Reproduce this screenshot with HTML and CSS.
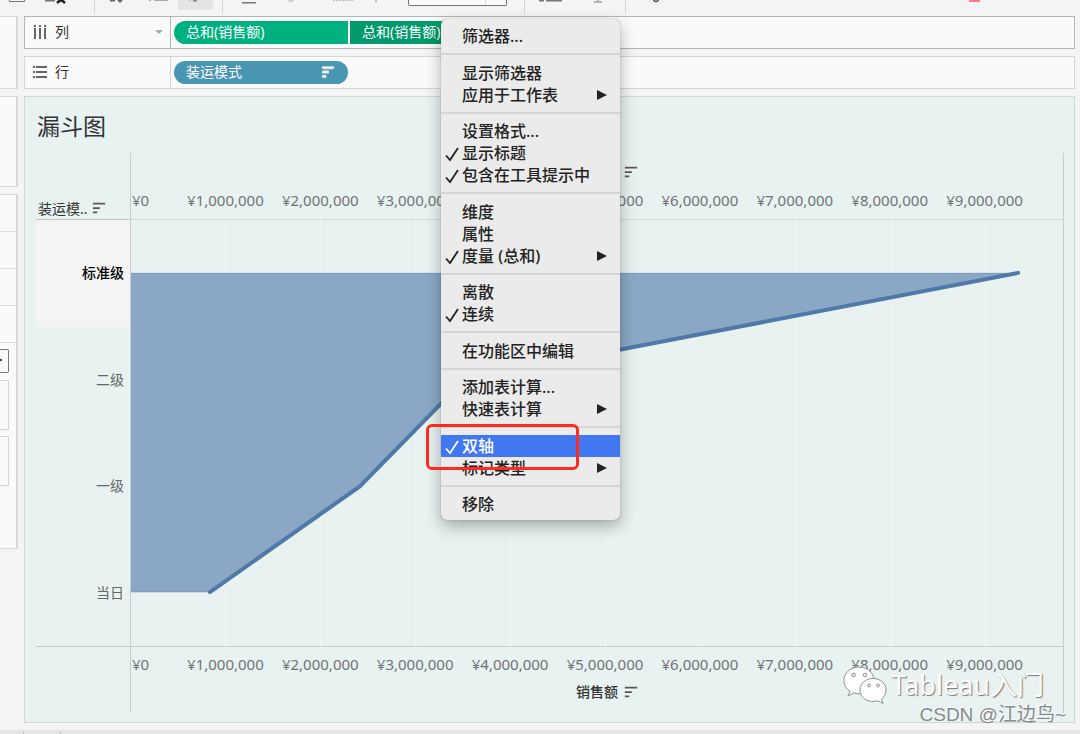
FILE: index.html
```html
<!DOCTYPE html>
<html lang="zh-CN">
<head>
<meta charset="utf-8">
<title>漏斗图</title>
<link rel="stylesheet" href="styles.css">
</head>
<body>
<svg class="defs" aria-hidden="true">
  <symbol id="sort" viewBox="0 0 16 16">
    <path class="halo" d="M2 3h12M2 8h7M2 13h4"/>
    <path class="bars" d="M1 3h14M1 8h8M1 13h5"/>
  </symbol>
  <symbol id="check" viewBox="0 0 16 16"><path d="M2 9.500l4 4.500L14 2" fill="none" stroke="currentColor" stroke-width="1.800"/></symbol>
</svg>
<header class="toolbar">
  <button aria-label="保存"><svg width="35" height="14" viewBox="0 0 35 14"><path d="M9.500-4v5.500h15V-4" fill="none" stroke="#777"/></svg></button>
  <button aria-label="清除"><svg width="59" height="14" viewBox="35 0 59 14"><path d="M45 0h10v1.500H45z" fill="#777"/><path d="M57-4l8 7M65-4l-8 7" stroke="#222" stroke-width="2.500"/></svg></button>
  <span class="rule"></span>
  <button aria-label="交换"><svg width="38" height="14" viewBox="95 0 38 14"><path d="M110 0h5v1.500h-5zM115-2h10l-5 5z" fill="#666"/></svg></button>
  <button aria-label="排序"><svg width="45" height="14" viewBox="133 0 45 14"><path d="M149 0h2v1h-2zM154 0h14v1h-14z" fill="#aaa"/></svg></button>
  <button aria-label="降序" class="on"><svg width="35" height="10" viewBox="178 0 35 10"><path d="M187-2l3 3 2-3zM193 0h4v1.500h-4z" fill="#888"/></svg></button>
  <span class="rule wide"></span>
  <button aria-label="突出显示"><svg width="40" height="14" viewBox="232 0 40 14"><path d="M242 2h14v1.500h-14z" fill="#777"/></svg></button>
  <button aria-label="附件"><svg width="44" height="14" viewBox="272 0 44 14"><circle cx="291" cy="-1" r="2.500" fill="none" stroke="#aaa"/></svg></button>
  <button aria-label="标签"><svg width="48" height="14" viewBox="316 0 48 14"><path d="M333 .5h20" stroke="#bbb" stroke-dasharray="2 1"/></svg></button>
  <button aria-label="固定"><svg width="44" height="14" viewBox="364 0 44 14"><path d="M376-1v3" stroke="#888"/></svg></button>
  <select aria-label="适合"><option></option></select>
  <span class="rule fit"></span>
  <button aria-label="显示"><svg width="50" height="14" viewBox="525 0 50 14"><path d="M539 0h5v1.500h-5zM546 0h16v1.500h-16z" fill="#777"/></svg></button>
  <button aria-label="演示"><svg width="50" height="14" viewBox="575 0 50 14"><path d="M598-2v3.500M594 2h8" stroke="#777"/></svg></button>
  <span class="rule"></span>
  <button aria-label="共享"><svg width="60" height="14" viewBox="626 0 60 14"><circle cx="656" cy="-1" r="2.500" fill="none" stroke="#555" stroke-width="1.500"/></svg></button>
  <button aria-label="智能推荐" class="end"><svg width="111" height="14" viewBox="969 0 111 14"><path d="M969 0h11v2h-11z" fill="#ff7a85"/></svg></button>
</header>

<div class="workspace">
  <aside class="side">
    <section class="card pages"></section>
    <section class="card filters"></section>
    <section class="card marks">
      <div class="line"></div><div class="line"></div><div class="line"></div><div class="line"></div>
      <button class="drop" aria-label="标记类型"><svg width="6" height="6" viewBox="0 0 6 6"><path d="M0 1h2v2H0z" fill="#444"/></svg></button>
      <div class="slot"></div><div class="slot"></div>
    </section>
  </aside>

  <main class="content">
    <section class="shelf active">
      <div class="name">
        <svg width="16" height="16" viewBox="0 0 16 16"><path d="M3 1v2M8 1v2M13 1v2M3 4v11M8 4v11M13 4v11" stroke="#666" stroke-width="2"/></svg>
        <span>列</span>
        <svg class="caret" width="8" height="4" viewBox="0 0 8 4"><path d="M0 0h8L4 4z" fill="#aaa"/></svg>
      </div>
      <div class="pills"><button class="pill green first">总和(销售额)</button><button class="pill dark">总和(销售额)</button></div>
    </section>
    <section class="shelf">
      <div class="name">
        <svg width="16" height="16" viewBox="0 0 16 16"><path d="M1 3h2M1 8h2M1 13h2M4 3h11M4 8h11M4 13h11" stroke="#666" stroke-width="2"/></svg>
        <span>行</span>
      </div>
      <div class="pills"><button class="pill blue">装运模式 <svg class="sort white" width="14" height="14"><use href="#sort"/></svg></button></div>
    </section>

    <section class="sheet">
      <h1>漏斗图</h1>
      <div class="chart">
        <div class="corner"><span>装运模..</span><svg class="sort" width="14" height="14"><use href="#sort"/></svg></div>
        <div class="axis top">
          <div class="title"><span>销售额</span><svg class="sort" width="14" height="14"><use href="#sort"/></svg></div>
          <div class="ticks"><span>¥0</span><span>¥1,000,000</span><span>¥2,000,000</span><span>¥3,000,000</span><span>¥4,000,000</span><span>¥5,000,000</span><span>¥6,000,000</span><span>¥7,000,000</span><span>¥8,000,000</span><span>¥9,000,000</span></div>
        </div>
        <div class="rows"><div class="picked"><span>标准级</span></div><div>二级</div><div>一级</div><div>当日</div></div>
        <div class="plot">
          <svg viewBox="0 0 933 427" preserveAspectRatio="none">
            <path class="grid" d="M95-6v439M190-6v439M285-6v439M380-6v439M475-6v439M571-6v439M666-6v439M761-6v439M856-6v439"/>
            <path class="area" d="M0 53H888L334 160 229 267 79 373H0z"/>
            <path class="edge" d="M0 53.500H888M0 372.500H79"/>
            <path class="trend" d="M888 53L334 160 229 267 79 373"/>
          </svg>
        </div>
        <div class="foot"></div>
        <div class="axis bottom">
          <div class="ticks"><span>¥0</span><span>¥1,000,000</span><span>¥2,000,000</span><span>¥3,000,000</span><span>¥4,000,000</span><span>¥5,000,000</span><span>¥6,000,000</span><span>¥7,000,000</span><span>¥8,000,000</span><span>¥9,000,000</span></div>
          <div class="title"><span>销售额</span><svg class="sort" width="14" height="14"><use href="#sort"/></svg></div>
        </div>
      </div>
    </section>
  </main>
</div>
<footer class="status"><span></span><span></span></footer>

<div class="menu" role="menu">
  <button role="menuitem">筛选器...</button>
  <hr>
  <button role="menuitem">显示筛选器</button>
  <button role="menuitem">应用于工作表<i></i></button>
  <hr>
  <button role="menuitem">设置格式...</button>
  <button role="menuitem"><svg><use href="#check"/></svg>显示标题</button>
  <button role="menuitem"><svg><use href="#check"/></svg>包含在工具提示中</button>
  <hr>
  <button role="menuitem">维度</button>
  <button role="menuitem">属性</button>
  <button role="menuitem"><svg><use href="#check"/></svg>度量 (总和)<i></i></button>
  <hr>
  <button role="menuitem">离散</button>
  <button role="menuitem"><svg><use href="#check"/></svg>连续</button>
  <hr>
  <button role="menuitem">在功能区中编辑</button>
  <hr>
  <button role="menuitem">添加表计算...</button>
  <button role="menuitem">快速表计算<i></i></button>
  <hr>
  <button role="menuitem" class="selected"><svg><use href="#check"/></svg>双轴</button>
  <button role="menuitem">标记类型<i></i></button>
  <hr>
  <button role="menuitem">移除</button>
</div>
<div class="callout"></div>

<div class="brand">
  <svg width="44" height="40" viewBox="0 0 44 40">
    <g fill="#fff" stroke="#8d9292" stroke-width="1">
      <path d="M16 2C7.500 2 1 8 1 15.500c0 4.500 2 8 6 10.500l-2 5 6-3c2 .6 4 1 6 .8C24 28 31 23 31 15.500 31 8 24.500 2 16 2z"/>
      <path d="M30 13.500c-7.500 0-13 5-13 11.500s5.500 11.500 13 11.500c1.700 0 3.300-.3 4.800-.8l5.200 2.800-1.500-4.500c2.800-2.200 4.500-5 4.500-9 0-6.500-5.500-11.500-13-11.500z"/>
    </g>
    <g fill="#e8f2f1" stroke="#8d9292"><circle cx="10.500" cy="10" r="1.800"/><circle cx="22" cy="10" r="1.800"/><circle cx="26" cy="20.500" r="1.500"/><circle cx="35" cy="20.500" r="1.500"/></g>
  </svg>
  <span>Tableau入门</span>
</div>
<div class="credit">CSDN @江边鸟~</div>
</body>
</html>
```
FILE: styles.css
```css
* { box-sizing: border-box; }

body {
  margin: 0;
  min-height: 100vh;
  display: flex;
  flex-direction: column;
  position: relative;
  background: #f4f4f4;
  color: #333;
  font: 14px/20px "Noto Sans", "Noto Sans CJK SC", sans-serif;
  overflow: hidden;
}

button {
  border: 0;
  padding: 0;
  background: none;
  font: inherit;
  color: inherit;
}

svg { display: block; flex: none; }
.defs { position: absolute; width: 0; height: 0; }

.toolbar {
  display: flex;
  align-items: flex-start;
  height: 16px;
  overflow: hidden;
}
.toolbar button { flex: none; }
.toolbar .on { background: #e4e4e4; }
.toolbar .end { margin-left: auto; }
.rule { flex: none; width: 1px; height: 14px; background: #d4d4d4; }
.rule.wide { margin: 0 9px; }
.rule.fit { margin-left: 17px; }
.toolbar select {
  width: 99px;
  height: 6px;
  flex: none;
  appearance: none;
  border: solid #777;
  border-width: 0 1px 1px;
  border-radius: 0 0 2px 2px;
  background: linear-gradient(#ddd, #ddd) 76px 0 / 1px 6px no-repeat #fafafa;
}

.workspace { flex: 1; display: flex; gap: 6px; padding-right: 5px; }

.side { width: 18px; flex: none; display: flex; flex-direction: column; gap: 7px; }
.card { border: solid #d8d8d8; border-width: 1px 2px 1px 0; background: #fafafa; }
.pages { height: 73px; }
.filters { height: 91px; }
.marks { height: 355px; display: flex; flex-direction: column; align-items: flex-start; }
.line { height: 37px; width: 100%; border-bottom: 1px solid #dedede; }
.drop {
  width: 9px;
  height: 24px;
  margin: 6px 0 7px;
  border: 1px solid #777;
  border-left: 0;
  border-radius: 0 2px 2px 0;
}
.slot {
  width: 9px;
  height: 50px;
  margin-bottom: 6px;
  border: 1px solid #d4d4d4;
  border-left: 0;
}

.content { flex: 1; min-width: 0; display: flex; flex-direction: column; gap: 7px; }

.shelf { display: flex; height: 33px; border: 1px solid #d4d4d4; background: #fafafa; }
.shelf.active { border-color: #b5b5b5; }
.name {
  width: 146px;
  flex: none;
  display: flex;
  align-items: center;
  gap: 7px;
  padding: 0 7px 2px;
  border-right: 1px solid #d4d4d4;
}
.active .name { border-color: #b5b5b5; }
.caret { margin-left: auto; }
.pills { display: flex; align-items: center; gap: 2px; padding-left: 3px; }
.pill {
  width: 174px;
  height: 23px;
  display: flex;
  align-items: center;
  justify-content: space-between;
  padding: 0 13px 2px 12px;
  color: #fff;
}
.green { background: #00b180; border-radius: 12px 0 0 12px; }
.dark { background: #00996b; }
.blue { background: #4996b2; border-radius: 12px; }

#sort .halo { fill: none; stroke: #fff; stroke-width: 4; stroke-opacity: .5; }
#sort .bars { fill: none; stroke: currentColor; stroke-width: 2; }
.sort { color: #555; }
.sort.white { color: #fff; }

.sheet {
  flex: 1;
  display: flex;
  flex-direction: column;
  padding: 12px 10px 9px 11px;
  border: 1px solid #d4d6d6;
  background: #e8f2f1;
}
h1 { margin: 0 0 10px; font-weight: 400; font-size: 23px; line-height: 34px; color: #333; padding-left: 1px; }

.chart {
  flex: 1;
  display: grid;
  grid-template-columns: 94px 1fr;
  grid-template-rows: 67px 1fr 66px;
}
.corner {
  display: flex;
  align-items: flex-end;
  gap: 4px;
  padding-left: 2px;
  border-bottom: 1px solid #c4c6c6;
}
.corner .sort { margin-bottom: 4px; }
.axis { display: flex; flex-direction: column; border: solid #c9cbcb; border-width: 0 1px; color: #707474; }
.axis.top { justify-content: flex-end; gap: 8px; padding-bottom: 9px; border-bottom: 1px solid #d2d8d8; }
.axis.bottom { gap: 8px; padding-top: 7px; }
.ticks {
  display: grid;
  grid-template-columns: 47fr repeat(9, 95fr) 31fr;
  font-size: 15px;
  white-space: nowrap;
}
.ticks span { display: flex; justify-content: center; min-width: 0; }
.ticks span:first-child { justify-content: flex-start; padding-left: 1px; }
.title { display: flex; align-items: center; justify-content: center; gap: 6px; padding-left: 20px; color: #333; font-weight: 500; }

.rows { display: grid; grid-template-rows: repeat(4, 1fr); border-bottom: 1px solid #c9cbcb; color: #666; }
.rows div { display: flex; align-items: center; justify-content: flex-end; padding-right: 6px; }
.rows .picked { background: #f4f4f4; color: #000; font-weight: 500; }
.plot { position: relative; border: solid #c9cbcb; border-width: 0 1px 1px; min-height: 0; }
.plot svg { position: absolute; inset: 0; width: 100%; height: 100%; overflow: visible; }
.plot path { fill: none; vector-effect: non-scaling-stroke; }
.plot .grid { stroke: #f1f2f3; }
.plot .area { fill: #8aa8c5; }
.plot .edge { stroke: #7b9dc1; }
.plot .trend { stroke: #4e79a8; stroke-width: 4; stroke-linecap: round; }

.status { display: flex; gap: 36px; height: 4px; margin-top: 7px; padding-left: 23px; background: #e6e6e6; }
.status span { width: 1px; margin-top: 2px; background: #bbb; }

.menu {
  position: absolute;
  left: 441px;
  top: 19px;
  width: 179px;
  height: 501px;
  display: flex;
  flex-direction: column;
  padding: 6px 0 5px;
  border-radius: 6px;
  background: #ebebeb;
  box-shadow: 0 0 1px rgba(0, 0, 0, .5), 0 6px 16px rgba(0, 0, 0, .3);
  color: #222;
  font-size: 16px;
  font-weight: 500;
}
.menu button {
  position: relative;
  height: 22px;
  flex: none;
  padding-left: 21px;
  line-height: 22px;
  text-align: left;
  white-space: nowrap;
}
.menu hr {
  flex: 1;
  width: 100%;
  margin: 0;
  border: 0;
  background: linear-gradient(#d5d5d5, #d5d5d5) 0 50% / 100% 2px no-repeat;
}
.menu svg { position: absolute; left: 3px; top: 4px; width: 16px; height: 16px; }
.menu i {
  position: absolute;
  right: 13px;
  top: 6px;
  border: 5px solid transparent;
  border-left: 10px solid #222;
  border-right: 0;
}
.menu .selected { background: #4178f2; color: #fff; }

.callout {
  position: absolute;
  left: 426px;
  top: 424px;
  width: 153px;
  height: 46px;
  border: 3px solid #fb2d20;
  border-radius: 6px;
}

.brand {
  position: absolute;
  right: 36px;
  bottom: 29px;
  display: flex;
  align-items: center;
  gap: 4px;
  color: #fff;
  font-size: 27px;
  line-height: 40px;
  text-shadow: 1px 1px 1px #777;
}
.credit {
  position: absolute;
  right: 14px;
  bottom: 6px;
  color: #858a8a;
  font: 19px/26px "Liberation Sans", "Noto Sans CJK SC", sans-serif;
  text-shadow: -1px -1px 0 #fff;
}
```
